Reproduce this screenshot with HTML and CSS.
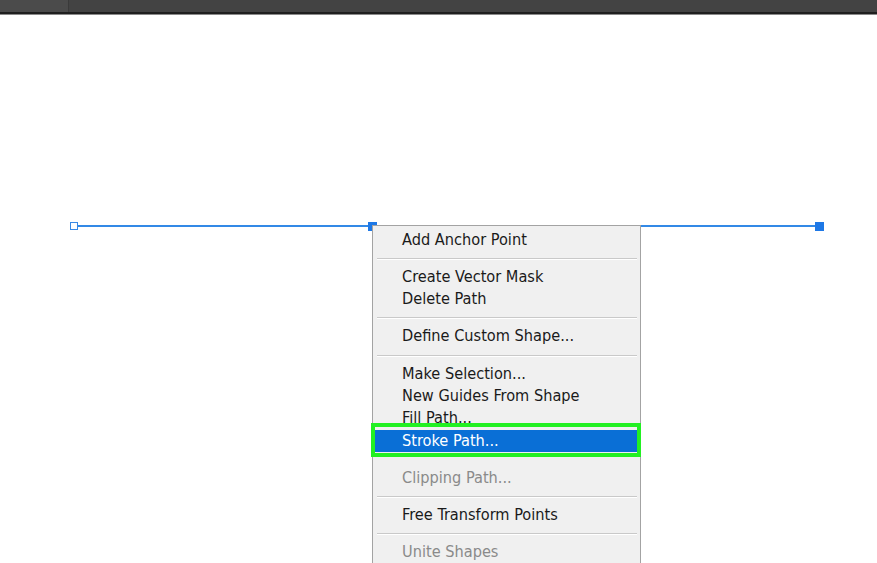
FILE: index.html
```html
<!DOCTYPE html>
<html>
<head>
<meta charset="utf-8">
<link rel="stylesheet" href="styles.css">
</head>
<body>
<div class="topbar"><div class="tab"></div></div>
<div class="canvas">
  <div class="path-line"></div>
  <div class="anchor hollow a-left"></div>
  <div class="anchor a-mid"></div>
  <div class="anchor a-right"></div>

  <div class="menu">
    <div class="item">Add Anchor Point</div>
    <div class="sep"></div>
    <div class="item">Create Vector Mask</div>
    <div class="item">Delete Path</div>
    <div class="sep"></div>
    <div class="item">Define Custom Shape...</div>
    <div class="sep"></div>
    <div class="item">Make Selection...</div>
    <div class="item">New Guides From Shape</div>
    <div class="item">Fill Path...</div>
    <div class="item active">Stroke Path...</div>
    <div class="sep hidden"></div>
    <div class="item disabled">Clipping Path...</div>
    <div class="sep"></div>
    <div class="item">Free Transform Points</div>
    <div class="sep"></div>
    <div class="item disabled">Unite Shapes</div>
  </div>
  <div class="callout"></div>
</div>
</body>
</html>
```
FILE: styles.css
```css
html, body {
  margin: 0;
  padding: 0;
  background: #ffffff;
  overflow: hidden;
}
body {
  width: 877px;
  height: 563px;
  font-family: "DejaVu Sans Condensed", "DejaVu Sans", sans-serif;
}
.topbar {
  height: 12px;
  background: #434343;
  border-bottom: 2px solid #1f1f1f;
  box-shadow: 0 1px 0 #8a8a8a;
  display: flex;
}
.tab {
  width: 68px;
  background: #4b4b4b;
  border-right: 1px solid #3a3a3a;
}
.canvas {
  position: relative;
  height: 549px;
}
.path-line {
  position: absolute;
  left: 78px;
  top: 211px;
  width: 740px;
  height: 1.5px;
  background: #3389e6;
}
.anchor {
  position: absolute;
  top: 208px;
  width: 7px;
  height: 7px;
  background: #1e78e6;
  border: 1px solid #1e78e6;
}
.anchor.hollow {
  background: #ffffff;
  top: 207.5px;
  width: 6px;
  height: 6px;
  border: 1.5px solid #3a8ae6;
}
.a-left { left: 70px; }
.a-mid { left: 368px; }
.a-right { left: 815px; }

.menu {
  position: absolute;
  left: 372px;
  top: 211px;
  width: 267px;
  height: 360px;
  background: #f0f0f0;
  border: 1px solid #a3a3a3;
  padding-top: 2.5px;
  box-sizing: content-box;
}
.item {
  height: 22.3px;
  line-height: 22.3px;
  padding-left: 28px;
  font-size: 16.2px;
  color: #1a1a1a;
  margin: 0 1px;
  white-space: nowrap;
}
.item.disabled { color: #8a8a8a; }
.item.active {
  background: #0a6fd6;
  color: #ffffff;
}
.sep {
  margin: 7px 3px 6px 4px;
  height: 0;
  border-top: 1px solid #c9c9c9;
  border-bottom: 1px solid #ffffff;
}
.sep.hidden {
  border-color: transparent;
}
.callout {
  position: absolute;
  left: 371px;
  top: 409px;
  width: 262px;
  height: 26px;
  border: 4px solid #22f022;
  box-sizing: content-box;
  padding: 0;
  pointer-events: none;
}
```
